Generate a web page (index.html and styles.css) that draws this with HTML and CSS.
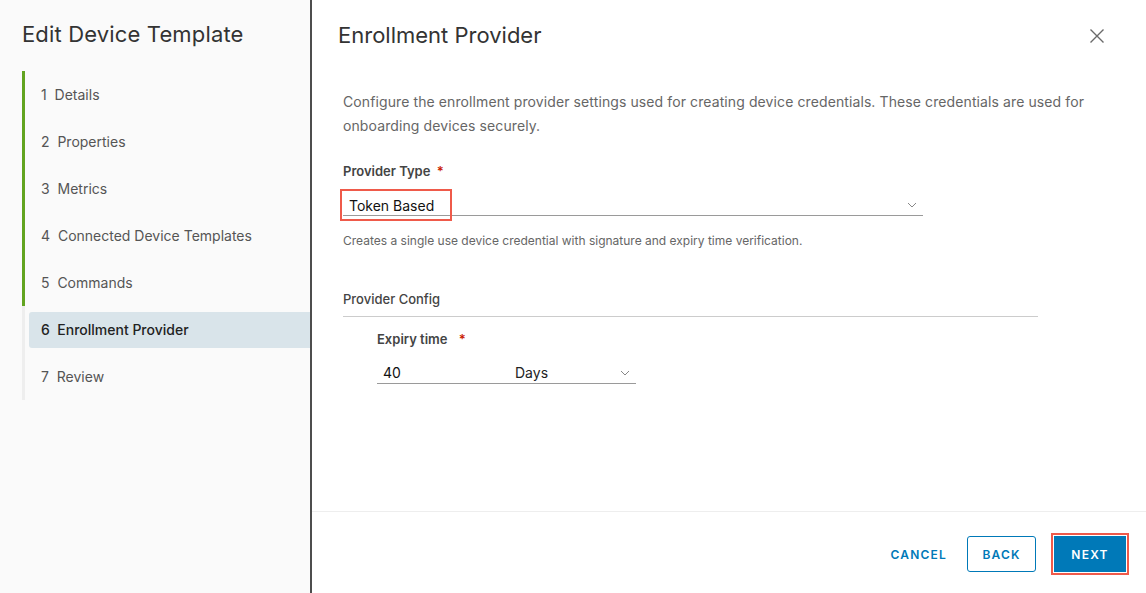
FILE: index.html
```html
<!DOCTYPE html>
<html>
<head>
  <meta charset="utf-8">
  <title>Edit Device Template</title>
  <link rel="stylesheet" href="styles.css">
</head>
<body>
  <div class="wizard">
    <aside class="side">
      <h2 class="side-title">Edit Device Template</h2>
      <ul class="steps">
        <li class="step done">1&nbsp; Details</li>
        <li class="step done">2&nbsp; Properties</li>
        <li class="step done">3&nbsp; Metrics</li>
        <li class="step done">4&nbsp; Connected Device Templates</li>
        <li class="step done">5&nbsp; Commands</li>
        <li class="step active">6&nbsp; Enrollment Provider</li>
        <li class="step">7&nbsp; Review</li>
      </ul>
    </aside>

    <main class="main">
      <div class="head">
        <h3 class="title">Enrollment Provider</h3>
        <svg class="close" width="16" height="16" viewBox="0 0 16 16"><path d="M1.5 1.5 L14.5 14.5 M14.5 1.5 L1.5 14.5" stroke="#6a6a6a" stroke-width="1.4" fill="none"/></svg>
      </div>

      <div class="body">
        <p class="desc">Configure the enrollment provider settings used for creating device credentials. These credentials are used for onboarding devices securely.</p>

        <div class="field">
          <label class="lbl">Provider Type <span class="req">*</span></label>
          <div class="select wide">
            <span class="val hl">Token Based</span>
            <svg class="chev" width="10" height="6" viewBox="0 0 10 6"><path d="M1 1 L5 5 L9 1" stroke="#888" stroke-width="1" fill="none"/></svg>
          </div>
          <div class="help">Creates a single use device credential with signature and expiry time verification.</div>
        </div>

        <div class="section">
          <div class="section-title">Provider Config</div>
          <div class="section-body">
            <label class="lbl">Expiry time <span class="req sp">*</span></label>
            <div class="select short">
              <span class="num">40</span>
              <span class="unit">Days</span>
              <svg class="chev" width="10" height="6" viewBox="0 0 10 6"><path d="M1 1 L5 5 L9 1" stroke="#888" stroke-width="1" fill="none"/></svg>
            </div>
          </div>
        </div>
      </div>

      <div class="foot">
        <button class="btn link">CANCEL</button>
        <button class="btn outline">BACK</button>
        <span class="hl-btn"><button class="btn primary">NEXT</button></span>
      </div>
    </main>
  </div>
</body>
</html>
```

FILE: styles.css
```css
* { box-sizing: border-box; }
html, body { margin: 0; height: 100%; }
body {
  font-family: "Inter", "Lato", sans-serif;
  color: #333;
  background: #fff;
}

.wizard { display: flex; height: 593px; }

.side {
  width: 312px;
  flex: none;
  background: #fafafa;
  border-right: 2px solid #4d4d4d;
  padding: 20px 0 0 22px;
}
.side-title {
  margin: 0 0 23px;
  font-size: 22px;
  font-weight: 400;
  color: #333;
  line-height: 28px;
  letter-spacing: 0.15px;
}
.steps { list-style: none; margin: 0; padding: 0; }
.step {
  height: 47px;
  line-height: 47px;
  padding-left: 16px;
  font-size: 14px;
  color: #555;
  border-left: 3px solid #eee;
  position: relative;
  isolation: isolate;
}
.step.done { border-left-color: #62a420; }
.step.active { color: #222; font-weight: 500; }
.step.active::before {
  content: "";
  position: absolute;
  left: 4px; right: 0; top: 6px; bottom: 5px;
  background: #d9e4ea;
  border-radius: 3px 0 0 3px;
  z-index: -1;
}

.main {
  flex: 1;
  display: flex;
  flex-direction: column;
}
.head {
  display: flex;
  justify-content: space-between;
  align-items: center;
  padding: 21px 41px 0 26px;
}
.title {
  margin: 0;
  font-size: 22px;
  font-weight: 400;
  line-height: 28px;
  color: #333;
}
.close { margin-top: 2px; }

.body { flex: 1; padding: 41px 0 0 31px; }
.desc {
  margin: 0;
  max-width: 760px;
  font-size: 14px;
  line-height: 24px;
  color: #666;
  letter-spacing: 0.1px;
}
.field { margin-top: 24px; width: 580px; }
.lbl {
  display: block;
  font-size: 13px;
  font-weight: 600;
  color: #444;
  line-height: 18px;
}
.req { color: #c92100; margin-left: 3px; }
.req.sp { margin-left: 8px; }

.select {
  display: flex;
  align-items: center;
  height: 32px;
  padding-top: 10px;
  border-bottom: 1px solid #9a9a9a;
  font-size: 14px;
  color: #111;
}
.select .chev { margin-left: auto; margin-right: 6px; }
.select.wide { margin-top: 4px; }
.val { padding-left: 7px; }
.hl {
  outline: 2px solid #ef5a4a;
  padding: 6px 16px 5px 7px;
  margin-left: -1px;
}
.help {
  margin-top: 17px;
  font-size: 12px;
  color: #666;
}

.section { margin-top: 43px; width: 695px; }
.section-title {
  font-size: 13px;
  font-weight: 500;
  color: #444;
  padding-bottom: 9px;
  border-bottom: 1px solid #ccc;
}
.section-body { padding: 13px 0 0 34px; }
.select.short { width: 259px; margin-top: 4px; }
.num { width: 138px; padding-left: 6px; }
.unit { color: #222; }

.foot {
  height: 82px;
  border-top: 1px solid #eee;
  display: flex;
  justify-content: flex-end;
  align-items: center;
  padding: 3px 20px 0 0;
}
.btn {
  font-family: inherit;
  font-size: 12px;
  font-weight: 600;
  letter-spacing: 1.2px;
  height: 36px;
  border-radius: 3px;
  cursor: pointer;
  background: none;
}
.btn.link { border: none; color: #0079b8; padding: 0 20px; }
.btn.outline { border: 1px solid #0079b8; color: #0079b8; width: 69px; margin-right: 18px; }
.btn.primary { background: #0079b8; border: none; color: #fff; width: 72px; border-radius: 0; }
.hl-btn { display: flex; outline: 2px solid #ef5a4a; outline-offset: 1px; }
```
